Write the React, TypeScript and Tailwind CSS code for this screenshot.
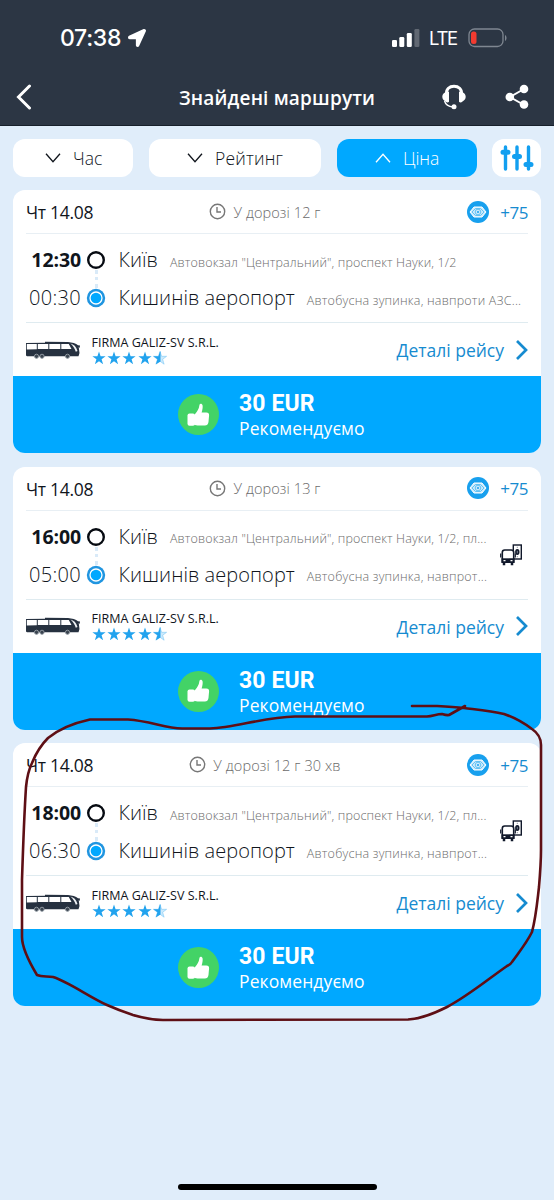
import { FaLocationArrow } from 'react-icons/fa';

type Stop = { time: string; city: string; address: string };
type Trip = { duration: string; from: Stop; to: Stop; eTicket: boolean };

const trips: Trip[] = [
  {
    duration: 'У дорозі 12 г',
    from: { time: '12:30', city: 'Київ', address: 'Автовокзал "Центральний", проспект Науки, 1/2' },
    to: { time: '00:30', city: 'Кишинів аеропорт', address: 'Автобусна зупинка, навпроти АЗС...' },
    eTicket: false,
  },
  {
    duration: 'У дорозі 13 г',
    from: { time: '16:00', city: 'Київ', address: 'Автовокзал "Центральний", проспект Науки, 1/2, пл...' },
    to: { time: '05:00', city: 'Кишинів аеропорт', address: 'Автобусна зупинка, навпрот...' },
    eTicket: true,
  },
  {
    duration: 'У дорозі 12 г 30 хв',
    from: { time: '18:00', city: 'Київ', address: 'Автовокзал "Центральний", проспект Науки, 1/2, пл...' },
    to: { time: '06:30', city: 'Кишинів аеропорт', address: 'Автобусна зупинка, навпрот...' },
    eTicket: true,
  },
];

function StatusBar() {
  return (
    <div className="flex h-[76px] items-center pl-[60px] pr-[46px] text-white">
      <span className="w-[62px] font-['Inter'] text-[23px] font-medium leading-none tracking-[-0.3px]">07:38</span>
      <FaLocationArrow className="ml-[6px] size-[18px]" />
      <svg className="ml-auto" width="28" height="18" viewBox="0 0 28 18" fill="white">
        <rect x="0" y="11" width="5" height="7" rx="1.3" />
        <rect x="7.3" y="8" width="5" height="10" rx="1.3" />
        <rect x="14.8" y="4" width="5" height="14" rx="1.3" />
        <rect x="22.4" y="0" width="5" height="18" rx="1.3" opacity="0.25" />
      </svg>
      <span className="ml-[9px] w-[28px] font-['Inter'] text-[18.5px] leading-none tracking-[-1.3px]">LTE</span>
      <svg className="ml-[11px]" width="40" height="20" viewBox="0 0 40 20" fill="none">
        <rect x="1" y="1" width="34" height="17.5" rx="5.5" stroke="#7f8791" strokeWidth="1.3" />
        <rect x="3" y="3.5" width="5.5" height="12.5" rx="2.5" fill="#f23b30" />
        <path d="M37 7v6c2-.8 2-5.2 0-6z" fill="#7f8791" />
      </svg>
    </div>
  );
}

function HeadsetIcon() {
  return (
    <svg width="24" height="26" viewBox="0 0 24 26" fill="none">
      <path d="M4.5 10C4 5 7.5 2.2 12 2.2S20 5 19.5 10" stroke="white" strokeWidth="3" />
      <path d="M2.5 17c1 3.500 4 5.500 8.500 6" stroke="white" strokeWidth="1.3" />
      <path d="M7 8v9.800C6 18.800 4.500 18.500 3.500 17.500 1.500 16.500.3 15 .3 12.800c0-2 1-3.600 2.700-4.300C4.200 7.600 5.800 7.300 7 8z" fill="white" />
      <path d="M17 8v9.800c1 1 2.500.7 3.500-.3 2-1 3.200-2.500 3.200-4.700 0-2-1-3.600-2.700-4.300C19.800 7.600 18.200 7.300 17 8z" fill="white" />
      <circle cx="12" cy="22.800" r="2.500" fill="white" />
    </svg>
  );
}

function ShareIcon() {
  return (
    <svg width="24" height="26" viewBox="0 0 24 26" fill="white">
      <path d="M19 5L5 13l14 8" stroke="white" strokeWidth="2" fill="none" />
      <circle cx="19" cy="5" r="4.300" />
      <circle cx="4.800" cy="13" r="4.300" />
      <circle cx="19" cy="20.500" r="4.300" />
    </svg>
  );
}

function Chevron({ up }: { up?: boolean }) {
  return (
    <svg width="16" height="10" viewBox="0 0 16 10" fill="none" stroke="currentColor" strokeWidth="1.3">
      <path d={up ? 'M1 9.300L8 1.200l7 8.100' : 'M1 .7l7 8.100L15 .7'} />
    </svg>
  );
}

function Filters() {
  return (
    <div className="flex h-[38px] text-[17.5px] font-light text-[#10151c]">
      <button className="flex w-[120px] items-center rounded-xl bg-white pl-[32px]">
        <Chevron />
        <span className="ml-[12px]">Час</span>
      </button>
      <button className="ml-[16px] flex w-[172px] items-center rounded-xl bg-white pl-[38px]">
        <Chevron />
        <span className="ml-[12px] tracking-[0.2px]">Рейтинг</span>
      </button>
      <button className="ml-[16px] flex w-[140px] items-center rounded-xl bg-[#00a8ff] pl-[38px] text-white">
        <Chevron up />
        <span className="ml-[12px] tracking-[-0.1px]">Ціна</span>
      </button>
      <button className="ml-[15px] flex w-[49px] items-center justify-center rounded-xl bg-white">
        <svg width="34" height="26" viewBox="0 0 34 26" stroke="#129ff0" strokeWidth="3.4" strokeLinecap="round">
          <path d="M5.500 2v22M17 2v22M28.500 2v22" />
          <path d="M3 7.300h5M14.500 11.500h5M26 19.500h5" strokeWidth="5" />
        </svg>
      </button>
    </div>
  );
}

function BonusIcon() {
  return (
    <svg width="22" height="22" viewBox="0 0 22 22" fill="none">
      <circle cx="11" cy="11" r="11" fill="#18a0ee" />
      <path d="M3 11l4-5h8l4 5-4 5H7z" fill="#c9eafd" stroke="white" />
      <path d="M5 11l3.500-3.500h5L17 11l-3.500 3.500h-5z" stroke="#4db7ef" strokeWidth="0.8" />
      <circle cx="11" cy="11" r="2.800" stroke="#4db7ef" strokeWidth="0.8" />
      <circle cx="11" cy="11" r="1" fill="#18a0ee" />
    </svg>
  );
}

function BusIcon() {
  return (
    <svg width="55" height="18" viewBox="0 0 55 18" fill="none">
      <path d="M0 2l19-.3V.7L42 1c4 .3 8 1.500 10 3.300l2 .2-.3 2.500-1-1L53.500 12l-1 3.300H1L0 14.500z" fill="#263140" />
      <path d="M.8 3h10v5.300L.8 8.500zM11.800 3h10.500v5H11.800zM23.300 3h11v5h-11zM35.300 3h7.500l2.700 5H35.300z" fill="white" />
      <path d="M44.500 2.500c3.300.8 5.700 3 7 7.500l-1.700.8c-1.200-3.500-2.800-6.100-5.300-8.300z" fill="#eef1f4" />
      <g fill="#3a4450" stroke="#9aa1a9" strokeWidth="0.9">
        <circle cx="10.500" cy="15.300" r="2.100" />
        <circle cx="16" cy="15.300" r="2.100" />
        <circle cx="41.500" cy="15.300" r="2.100" />
      </g>
    </svg>
  );
}

function ThumbIcon() {
  return (
    <svg className="mr-px" width="24" height="26" viewBox="0 0 24 26" fill="white">
      <rect x="1.500" y="11.500" width="7.500" height="12.300" rx="2" />
      <path d="M8 13.200C10 11 12 8.500 12.800 6l.7-3.300c.4-1.600 2.800-1.300 3.100.8.300 2-.2 4.500-1 7h4.700c2 0 3 1.200 2.800 2.800L22.500 20c-.4 2.400-1.600 3.600-3.600 3.600h-6c-2 0-3.700-.5-4.900-1.200z" />
    </svg>
  );
}

function ETicketIcon() {
  return (
    <svg className="shrink-0" width="22" height="22" viewBox="0 0 22 22" fill="none">
      <rect x="13.300" y="1" width="8" height="14" stroke="#10182a" strokeWidth="1.4" fill="white" />
      <ellipse cx="17.300" cy="8" rx="2.200" ry="3" fill="#10182a" />
      <path d="M17.300 2.800v1M17.300 12.200v1M17.300 6.800v2.500" stroke="#7b8190" />
      <path d="M2.300 18V8.500C2.300 6.700 3 6 4.700 6h6.600c1.700 0 2.400.7 2.400 2.500V18z" fill="white" stroke="#10182a" strokeWidth="1.6" />
      <path d="M1.500 14.300h13V19h-13z" fill="#10182a" />
      <path d="M.7 9.500v4M15.300 9.500v4" stroke="#10182a" strokeWidth="1.200" />
      <path d="M4 19v2.200M12 19v2.200" stroke="#10182a" strokeWidth="2.500" />
      <path d="M3.500 16.700h2M10.500 16.700h2" stroke="white" strokeWidth="1.3" />
    </svg>
  );
}

const STAR = 'M7 .5l1.600 4.800h5L9.600 8.300l1.500 4.900L7 10.200l-4.100 3 1.500-4.900L.4 5.300h5z';

function Rating() {
  return (
    <div className="flex gap-[1.4px]">
      {[0, 1, 2, 3].map((i) => (
        <svg key={i} width="14" height="14" viewBox="0 0 14 14" fill="#22a3ee">
          <path d={STAR} />
        </svg>
      ))}
      <svg width="14" height="14" viewBox="0 0 14 14">
        <path d={STAR} fill="#cdeafc" stroke="#7cc8f5" strokeWidth="0.6" />
        <path d="M7.500.5v10L2.900 13.200l1.500-4.900L.4 5.300h5L7 .5z" fill="#22a3ee" />
      </svg>
    </div>
  );
}

function StopRow({ stop, departure }: { stop: Stop; departure?: boolean }) {
  return (
    <div className="flex h-[38px] items-center whitespace-nowrap">
      <span
        className={
          departure
            ? 'w-[55px] text-right text-[19.5px] font-bold tracking-[-0.1px]'
            : 'w-[55px] text-right text-[20px] font-light tracking-[0.3px]'
        }
      >
        {stop.time}
      </span>
      <svg className="ml-[5px]" width="20" height="20" viewBox="0 0 20 20" fill="none">
        {departure ? (
          <circle cx="10" cy="10" r="7.800" stroke="#070b12" strokeWidth="2.4" />
        ) : (
          <>
            <circle cx="10" cy="10" r="9.200" fill="#2095e0" />
            <circle cx="10" cy="10" r="6" fill="#00a8ff" stroke="white" strokeWidth="1.3" />
          </>
        )}
      </svg>
      <span className="ml-[12.5px] text-[20px] font-light tracking-[0.05px]">{stop.city}</span>
      <span
        className={
          departure
            ? 'ml-[12px] mt-[6px] text-[12.5px] font-light tracking-[0.13px] text-[#6b6b6b]'
            : 'ml-[12px] mt-[6px] text-[12.5px] font-light tracking-[0.21px] text-[#6b6b6b]'
        }
      >
        {stop.address}
      </span>
    </div>
  );
}

function TripCard({ trip }: { trip: Trip }) {
  return (
    <div className="h-[263px] overflow-hidden rounded-xl bg-white text-[#10151c]">
      <div className="px-[13px]">
        <div className="grid h-[44px] grid-cols-[88px_1fr_112px] items-center border-b border-[#e8eff4]">
          <span className="mt-[2px] whitespace-nowrap text-[17.5px] tracking-[-0.3px]">Чт 14.08</span>
          <div className="flex items-center justify-center gap-[7px] text-[14.5px] font-light text-[#6b6b6b]">
            <svg width="17" height="17" viewBox="0 0 17 17" fill="none" stroke="#777" strokeWidth="1.4">
              <circle cx="8.500" cy="8.500" r="7.200" />
              <path d="M8 4v5h4" />
            </svg>
            <span className="mt-[2px] tracking-[0.1px]">{trip.duration}</span>
          </div>
          <div className="flex items-center justify-end gap-[11px] text-[17px] text-[#168bd0]">
            <BonusIcon />
            <span className="mt-[2px] tracking-[-0.5px]">+75</span>
          </div>
        </div>

        <div className="flex h-[89px] items-center justify-between border-b border-[#dfebf0] pr-[6px]">
          <div className="relative pt-[2px]">
            <div className="absolute left-[69px] top-[31px] h-[18px] border-l-[3px] border-dotted border-[#d9eaf8]" />
            <StopRow stop={trip.from} departure />
            <StopRow stop={trip.to} />
          </div>
          {trip.eTicket && <ETicketIcon />}
        </div>

        <div className="flex h-[53px] items-center">
          <BusIcon />
          <div className="mb-px ml-[10.5px]">
            <div className="whitespace-nowrap text-[12.5px] leading-[17px] tracking-[0.03px]">FIRMA GALIZ-SV S.R.L.</div>
            <Rating />
          </div>
          <div className="ml-auto flex items-center gap-[11px] text-[#168bd0]">
            <span className="mt-[2px] whitespace-nowrap text-[17.5px]">Деталі рейсу</span>
            <svg width="13" height="22" viewBox="0 0 13 22" fill="none" stroke="currentColor" strokeWidth="2.7">
              <path d="M2 2l9 9-9 9" />
            </svg>
          </div>
        </div>
      </div>

      <div className="flex h-[77px] items-center bg-[#00a8ff] pl-[165px] text-white">
        <div className="flex size-[41px] items-center justify-center rounded-full bg-[#43d366]">
          <ThumbIcon />
        </div>
        <div className="ml-[20px] mt-[2px] whitespace-nowrap">
          <div className="font-['Roboto'] text-[23px] font-bold leading-[25px] tracking-[0.1px]">30 EUR</div>
          <div className="text-[17.5px] leading-[24px] tracking-[0.1px]">Рекомендуємо</div>
        </div>
      </div>
    </div>
  );
}

export default function App() {
  return (
    <div className="relative flex h-[1200px] w-[554px] flex-col overflow-hidden bg-[#e0edfa] font-['Open_Sans','Noto_Sans',sans-serif]">
      <header className="h-[126px] border-b border-[#17202b] bg-[#2c3644]">
        <StatusBar />
        <div className="flex h-[42px] items-center px-[16px] text-white">
          <svg width="16" height="26" viewBox="0 0 16 26" fill="none" stroke="white" strokeWidth="3" strokeLinecap="round">
            <path d="M13.500 2L2.500 13l11 11" />
          </svg>
          <h1 className="ml-[147px] mr-auto mt-[2px] whitespace-nowrap text-[19px] font-semibold tracking-[0.17px]">
            Знайдені маршрути
          </h1>
          <div className="mr-[9px] flex gap-[39px]">
            <HeadsetIcon />
            <ShareIcon />
          </div>
        </div>
      </header>

      <main className="flex flex-col px-[13px] pt-[13px]">
        <Filters />
        <div className="mt-[13px] flex flex-col gap-[13.5px]">
          {trips.map((trip) => (
            <TripCard key={trip.from.time} trip={trip} />
          ))}
        </div>
      </main>

      <div className="mb-[10px] mt-auto h-[6px] w-[199px] self-center rounded-full bg-black" />

      {/* hand-drawn marker around the last trip */}
      <svg className="pointer-events-none absolute inset-0" width="554" height="1200" fill="none">
        <path
          d="M412 706H437C448 706.500 456 707 464 708C480 710 491 711 504 714C516 718 524 723 532 729C538 733 541 738 541 745V850C541 863 540 875 539 887C537 904 536 917 532 932C526 944 519 952 512 962Q511 964 507 966C487 980 468 996 447 1007C435 1013 422 1019 408 1019.500L163 1020C152 1020 143 1018 133 1015C124 1012 116 1009 107 1005C89 997 69 982 53 977C47 976 42 977 37 975C31 965 22 948 22 937V880C23 849 24 818 26 787C27 777 28 771 32 763C36 753 41 745 48 738C59 729 74 723 90 719.500H128C150 721 165 728 182 728.500H210C235 728 263 717 295 716.500H427C433 716 437 714 442 714Q447 715.500 449 715L465 706"
          stroke="#5e0f15"
          strokeWidth="2.6"
          strokeLinecap="round"
          strokeLinejoin="round"
        />
      </svg>
    </div>
  );
}
